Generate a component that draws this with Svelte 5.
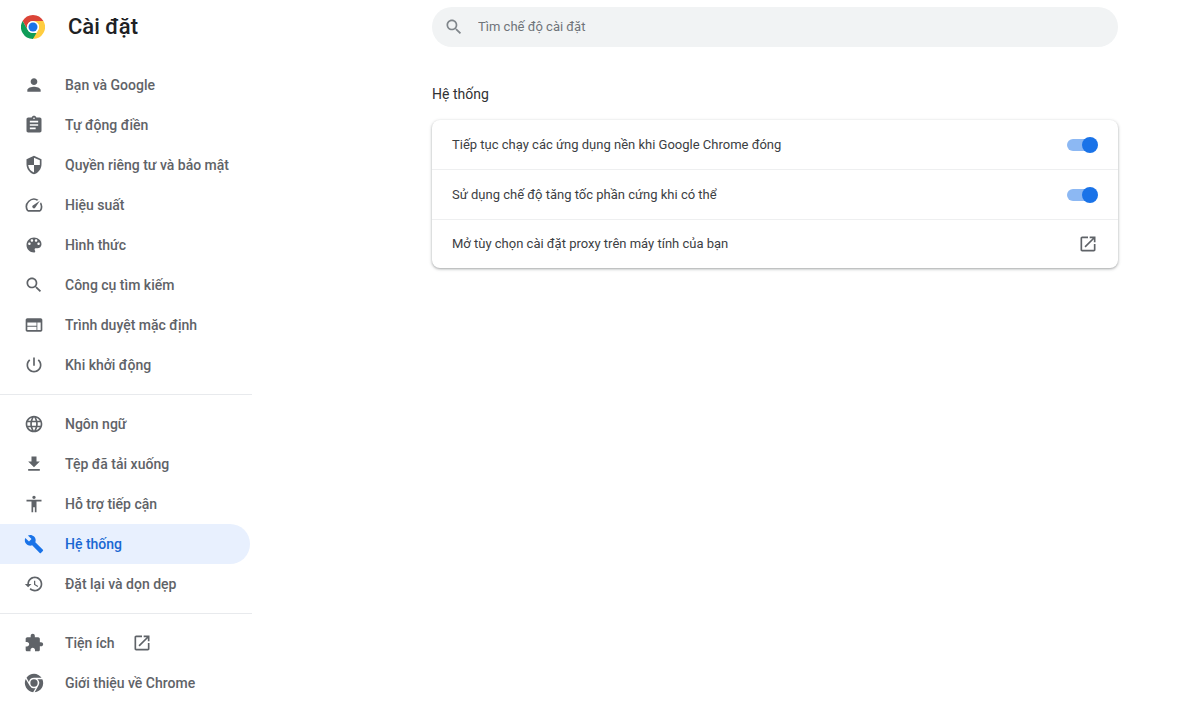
<script lang="ts">
  type MenuItem = { id: string; label: string; icon: string; external?: boolean };

  const icons: Record<string, string> = {
    person:
      'M12 12c2.21 0 4-1.79 4-4s-1.79-4-4-4-4 1.79-4 4 1.79 4 4 4zm0 2c-2.67 0-8 1.34-8 4v2h16v-2c0-2.66-5.33-4-8-4z',
    assignment:
      'M19 3h-4.18C14.4 1.84 13.3 1 12 1c-1.3 0-2.4.84-2.82 2H5c-1.1 0-2 .9-2 2v14c0 1.1.9 2 2 2h14c1.1 0 2-.9 2-2V5c0-1.1-.9-2-2-2zm-7 0c.55 0 1 .45 1 1s-.45 1-1 1-1-.45-1-1 .45-1 1-1zm2 14H7v-2h7v2zm3-4H7v-2h10v2zm0-4H7V7h10v2z',
    shield:
      'M12 1L3 5v6c0 5.55 3.84 10.74 9 12 5.16-1.26 9-6.45 9-12V5l-9-4zM12 3.19l7 3.11v5.69h-7V3.19zM12 12v8.93c-3.72-1.15-6.47-4.82-7-8.94h7z',
    speed:
      'M20.38 8.57l-1.23 1.85a8 8 0 0 1-.22 7.58H5.07A8 8 0 0 1 15.58 6.85l1.85-1.23A10 10 0 0 0 3.35 19a2 2 0 0 0 1.72 1h13.85a2 2 0 0 0 1.74-1 10 10 0 0 0-.27-10.44zm-9.79 6.84a2 2 0 0 0 2.83 0l5.66-8.49-8.49 5.66a2 2 0 0 0 0 2.83z',
    palette:
      'M12 3c-4.97 0-9 4.03-9 9s4.03 9 9 9c.83 0 1.5-.67 1.5-1.5 0-.39-.15-.74-.39-1.01-.23-.26-.38-.61-.38-.99 0-.83.67-1.5 1.5-1.5H16c2.76 0 5-2.24 5-5 0-4.42-4.03-8-9-8zm-5.5 9c-.83 0-1.5-.67-1.5-1.5S5.67 9 6.5 9 8 9.67 8 10.5 7.33 12 6.5 12zm3-4C8.67 8 8 7.33 8 6.5S8.67 5 9.5 5s1.5.67 1.5 1.5S10.33 8 9.5 8zm5 0c-.83 0-1.5-.67-1.5-1.5S13.67 5 14.5 5s1.5.67 1.5 1.5S15.33 8 14.5 8zm3 4c-.83 0-1.5-.67-1.5-1.5S16.67 9 17.5 9s1.5.67 1.5 1.5-.67 1.5-1.5 1.5z',
    search:
      'M15.5 14h-.79l-.28-.27C15.41 12.59 16 11.11 16 9.5 16 5.91 13.09 3 9.5 3S3 5.91 3 9.5 5.91 16 9.5 16c1.61 0 3.09-.59 4.23-1.57l.27.28v.79l5 4.99L20.49 19l-4.99-5zm-6 0C7.01 14 5 11.99 5 9.5S7.01 5 9.5 5 14 7.01 14 9.5 11.99 14 9.5 14z',
    browser:
      'M20 4H4c-1.1 0-1.99.9-1.99 2L2 18c0 1.1.9 2 2 2h16c1.1 0 2-.9 2-2V6c0-1.1-.9-2-2-2zm-5 14H4v-4h11v4zm0-5H4V9h11v4zm5 5h-4V9h4v9z',
    power:
      'M13 3h-2v10h2V3zm4.83 2.17l-1.42 1.42C17.99 7.86 19 9.81 19 12c0 3.87-3.13 7-7 7s-7-3.13-7-7c0-2.19 1.01-4.14 2.58-5.42L6.17 5.17C4.23 6.82 3 9.26 3 12c0 4.97 4.03 9 9 9s9-4.03 9-9c0-2.74-1.23-5.18-3.17-6.83z',
    globe:
      'M11.99 2C6.47 2 2 6.48 2 12s4.47 10 9.99 10C17.52 22 22 17.52 22 12S17.52 2 11.99 2zm6.93 6h-2.95c-.32-1.25-.78-2.45-1.38-3.56 1.84.63 3.37 1.91 4.33 3.56zM12 4.04c.83 1.2 1.48 2.53 1.91 3.96h-3.82c.43-1.43 1.08-2.76 1.91-3.96zM4.26 14C4.1 13.36 4 12.69 4 12s.1-1.36.26-2h3.38c-.08.66-.14 1.32-.14 2s.06 1.34.14 2H4.26zm.82 2h2.95c.32 1.25.78 2.45 1.38 3.56-1.84-.63-3.37-1.9-4.33-3.56zm2.95-8H5.08c.96-1.66 2.49-2.93 4.33-3.56C8.81 5.55 8.35 6.75 8.03 8zM12 19.96c-.83-1.2-1.48-2.53-1.91-3.96h3.82c-.43 1.43-1.08 2.76-1.91 3.96zM14.34 14H9.66c-.09-.66-.16-1.32-.16-2s.07-1.35.16-2h4.68c.09.65.16 1.32.16 2s-.07 1.34-.16 2zm.25 5.56c.6-1.11 1.06-2.31 1.38-3.56h2.95c-.96 1.65-2.49 2.93-4.33 3.56zM16.36 14c.08-.66.14-1.32.14-2s-.06-1.34-.14-2h3.38c.16.64.26 1.31.26 2s-.1 1.36-.26 2h-3.38z',
    download: 'M19 9h-4V3H9v6H5l7 7 7-7zM5 18v2h14v-2H5z',
    accessibility:
      'M12 2c1.1 0 2 .9 2 2s-.9 2-2 2-2-.9-2-2 .9-2 2-2zm9 7h-6v13h-2v-6h-2v6H9V9H3V7h18v2z',
    wrench:
      'M22.7 19l-9.1-9.1c.9-2.3.4-5-1.5-6.9-2-2-5-2.4-7.4-1.3L9 6 6 9 1.6 4.7C.4 7.1.9 10.1 2.9 12.1c1.9 1.9 4.6 2.4 6.9 1.5l9.1 9.1c.4.4 1 .4 1.4 0l2.3-2.3c.5-.4.5-1.1.1-1.4z',
    restore:
      'M13 3c-4.97 0-9 4.03-9 9H1l3.89 3.89.07.14L9 12H6c0-3.87 3.13-7 7-7s7 3.13 7 7-3.13 7-7 7c-1.93 0-3.68-.79-4.94-2.06l-1.42 1.42C8.27 19.99 10.51 21 13 21c4.97 0 9-4.03 9-9s-4.03-9-9-9zm-1 5v5l4.28 2.54.72-1.21-3.5-2.08V8H12z',
    extension:
      'M20.5 11H19V7c0-1.1-.9-2-2-2h-4V3.5C13 2.12 11.88 1 10.5 1S8 2.12 8 3.5V5H4c-1.1 0-1.99.9-1.99 2v3.8H3.5c1.49 0 2.7 1.21 2.7 2.7s-1.21 2.7-2.7 2.7H2V20c0 1.1.9 2 2 2h3.8v-1.5c0-1.49 1.21-2.7 2.7-2.7 1.49 0 2.7 1.21 2.7 2.7V22H17c1.1 0 2-.9 2-2v-4h1.5c1.38 0 2.5-1.12 2.5-2.5S21.88 11 20.5 11z',
    chrome:
      'M12 5.8H21.09A11 11 0 0 0 3.02 5.65L5.94 10.7A6.2 6.2 0 0 1 12 5.8zM17.37 15.1L12.82 22.97A11 11 0 0 0 21.99 7.4L16.16 7.4A6.2 6.2 0 0 1 17.37 15.1zM6.63 15.1L2.09 7.23A11 11 0 0 0 10.99 22.95L13.91 17.9A6.2 6.2 0 0 1 6.63 15.1zM12 7.6a4.4 4.4 0 1 0 0 8.8 4.4 4.4 0 0 0 0-8.8z',
    launch:
      'M19 19H5V5h7V3H5c-1.11 0-2 .9-2 2v14c0 1.1.89 2 2 2h14c1.1 0 2-.9 2-2v-7h-2v7zM14 3v2h3.59l-9.83 9.83 1.41 1.41L19 6.41V10h2V3h-7z',
  };

  const groups: MenuItem[][] = [
    [
      { id: 'people', label: 'Bạn và Google', icon: 'person' },
      { id: 'autofill', label: 'Tự động điền', icon: 'assignment' },
      { id: 'privacy', label: 'Quyền riêng tư và bảo mật', icon: 'shield' },
      { id: 'performance', label: 'Hiệu suất', icon: 'speed' },
      { id: 'appearance', label: 'Hình thức', icon: 'palette' },
      { id: 'search', label: 'Công cụ tìm kiếm', icon: 'search' },
      { id: 'default-browser', label: 'Trình duyệt mặc định', icon: 'browser' },
      { id: 'on-startup', label: 'Khi khởi động', icon: 'power' },
    ],
    [
      { id: 'languages', label: 'Ngôn ngữ', icon: 'globe' },
      { id: 'downloads', label: 'Tệp đã tải xuống', icon: 'download' },
      { id: 'accessibility', label: 'Hỗ trợ tiếp cận', icon: 'accessibility' },
      { id: 'system', label: 'Hệ thống', icon: 'wrench' },
      { id: 'reset', label: 'Đặt lại và dọn dẹp', icon: 'restore' },
    ],
    [
      { id: 'extensions', label: 'Tiện ích', icon: 'extension', external: true },
      { id: 'help', label: 'Giới thiệu về Chrome', icon: 'chrome' },
    ],
  ];

  let selected = $state('system');
  let query = $state('');
  let toggles = $state([
    { id: 'background', label: 'Tiếp tục chạy các ứng dụng nền khi Google Chrome đóng', on: true },
    { id: 'hardware', label: 'Sử dụng chế độ tăng tốc phần cứng khi có thể', on: true },
  ]);
</script>

{#snippet icon(name: string)}
  <svg class="icon" viewBox="0 0 24 24" aria-hidden="true"><path fill-rule="evenodd" d={icons[name]} /></svg>
{/snippet}

<div class="page">
  <aside class="sidebar">
    <header class="brand">
      <svg class="logo" viewBox="0 0 48 48" aria-hidden="true">
        <path fill="#db4437" d="M24 0a24 24 0 0 1 20.8 12H24a12 12 0 0 0-10.4 18L3.2 12A24 24 0 0 1 24 0z" />
        <path fill="#0f9d58" d="M3.2 12l10.4 18A12 12 0 0 0 24 36h10.4L24 48A24 24 0 0 1 3.2 12z" />
        <path fill="#ffcd40" d="M44.8 12A24 24 0 0 1 24 48l10.4-18A12 12 0 0 0 34.4 18L24 12z" />
        <circle cx="24" cy="24" r="12" fill="#fff" />
        <circle cx="24" cy="24" r="9" fill="#1a73e8" />
      </svg>
      <h1>Cài đặt</h1>
    </header>

    <nav class="menu" aria-label="Cài đặt">
      {#each groups as group, i}
        {#if i > 0}
          <hr />
        {/if}
        <ul>
          {#each group as item (item.id)}
            <li>
              <a
                href="#{item.id}"
                class:selected={selected === item.id}
                aria-current={selected === item.id ? 'page' : undefined}
                onclick={() => (selected = item.id)}
              >
                {@render icon(item.icon)}
                <span class="label">
                  {item.label}
                  {#if item.external}
                    {@render icon('launch')}
                  {/if}
                </span>
              </a>
            </li>
          {/each}
        </ul>
      {/each}
    </nav>
  </aside>

  <main class="main">
    <div class="content">
      <div class="toolbar">
        <label class="search">
          {@render icon('search')}
          <input type="text" bind:value={query} placeholder="Tìm chế độ cài đặt" aria-label="Tìm chế độ cài đặt" />
        </label>
      </div>

      <section>
        <h2>Hệ thống</h2>
        <div class="card">
          {#each toggles as toggle (toggle.id)}
            <label class="row">
              <span>{toggle.label}</span>
              <input class="toggle" type="checkbox" bind:checked={toggle.on} />
            </label>
          {/each}
          <button class="row" type="button">
            <span>Mở tùy chọn cài đặt proxy trên máy tính của bạn</span>
            {@render icon('launch')}
          </button>
        </div>
      </section>
    </div>
  </main>
</div>

<style>
  :global(body) {
    background: #fff;
  }

  .page {
    display: flex;
    min-height: 100vh;
    font-family: Roboto, 'Noto Sans', sans-serif;
    font-size: 13px;
    line-height: 20px;
    color: #3c4043;
  }

  .icon {
    width: 20px;
    height: 20px;
    flex-shrink: 0;
    fill: #5f6368;
  }

  .sidebar {
    width: 252px;
    flex-shrink: 0;
  }

  .brand {
    display: flex;
    align-items: center;
    gap: 23px;
    height: 54px;
    padding-left: 21px;
  }

  .logo {
    width: 24px;
    height: 24px;
  }

  h1 {
    margin: 0;
    font-size: 22px;
    line-height: 28px;
    font-weight: 500;
    color: #202124;
  }

  .menu {
    padding-top: 11px;
  }

  .menu ul {
    margin: 0;
    padding: 0;
    list-style: none;
  }

  .menu hr {
    height: 1px;
    margin: 9px 0;
    border: none;
    background: #e8eaed;
  }

  .menu a {
    display: flex;
    align-items: center;
    gap: 21px;
    height: 40px;
    margin-right: 2px;
    padding-left: 24px;
    border-radius: 0 20px 20px 0;
    font-size: 14px;
    font-weight: 500;
    color: #5f6368;
    text-decoration: none;
  }

  .menu a:hover {
    background: #f1f3f4;
  }

  .menu a.selected {
    background: #e8f0fe;
    color: #1967d2;
  }

  .menu a.selected .icon {
    fill: #1a73e8;
  }

  .label {
    display: flex;
    align-items: center;
    gap: 17px;
  }

  .main {
    flex: 1;
    min-width: 0;
    padding: 0 0 40px 98px;
  }

  .content {
    max-width: 686px;
    margin: 0 auto;
  }

  .toolbar {
    display: flex;
    align-items: center;
    height: 54px;
  }

  .search {
    display: flex;
    align-items: center;
    gap: 14px;
    flex: 1;
    height: 40px;
    padding: 0 20px 0 12px;
    border-radius: 20px;
    background: #f1f3f4;
  }

  .search .icon {
    fill: #80868b;
  }

  .search input {
    flex: 1;
    min-width: 0;
    padding: 0;
    border: none;
    outline: none;
    background: none;
    font: inherit;
    color: #202124;
  }

  .search input::placeholder {
    color: #6f7479;
    opacity: 1;
  }

  h2 {
    margin: 0;
    padding: 30px 0 16px;
    font-size: 14px;
    line-height: 20px;
    font-weight: 400;
    color: #303134;
  }

  .card {
    border-radius: 8px;
    background: #fff;
    box-shadow:
      0 1px 2px rgba(60, 64, 67, 0.3),
      0 1px 3px 1px rgba(60, 64, 67, 0.15);
  }

  .row {
    display: flex;
    align-items: center;
    justify-content: space-between;
    gap: 20px;
    box-sizing: content-box;
    min-height: 49px;
    padding: 0 20px;
    cursor: pointer;
  }

  .row + .row {
    border-top: 1px solid #eeeff0;
  }

  button.row {
    width: calc(100% - 40px);
    min-height: 48px;
    border-width: 0;
    background: none;
    font: inherit;
    color: inherit;
    text-align: left;
  }

  .toggle {
    appearance: none;
    display: grid;
    align-items: center;
    flex-shrink: 0;
    width: 31px;
    height: 16px;
    margin: 0;
    cursor: pointer;
  }

  .toggle::before,
  .toggle::after {
    content: '';
    grid-area: 1 / 1;
  }

  .toggle::before {
    width: 28px;
    height: 12px;
    border-radius: 6px;
    background: #bdc1c6;
  }

  .toggle::after {
    width: 16px;
    height: 16px;
    border-radius: 50%;
    background: #fff;
    box-shadow: 0 1px 3px rgba(60, 64, 67, 0.4);
  }

  .toggle:checked::before {
    background: #8cb8f3;
  }

  .toggle:checked::after {
    justify-self: end;
    background: #1a73e8;
    box-shadow: none;
  }
</style>
